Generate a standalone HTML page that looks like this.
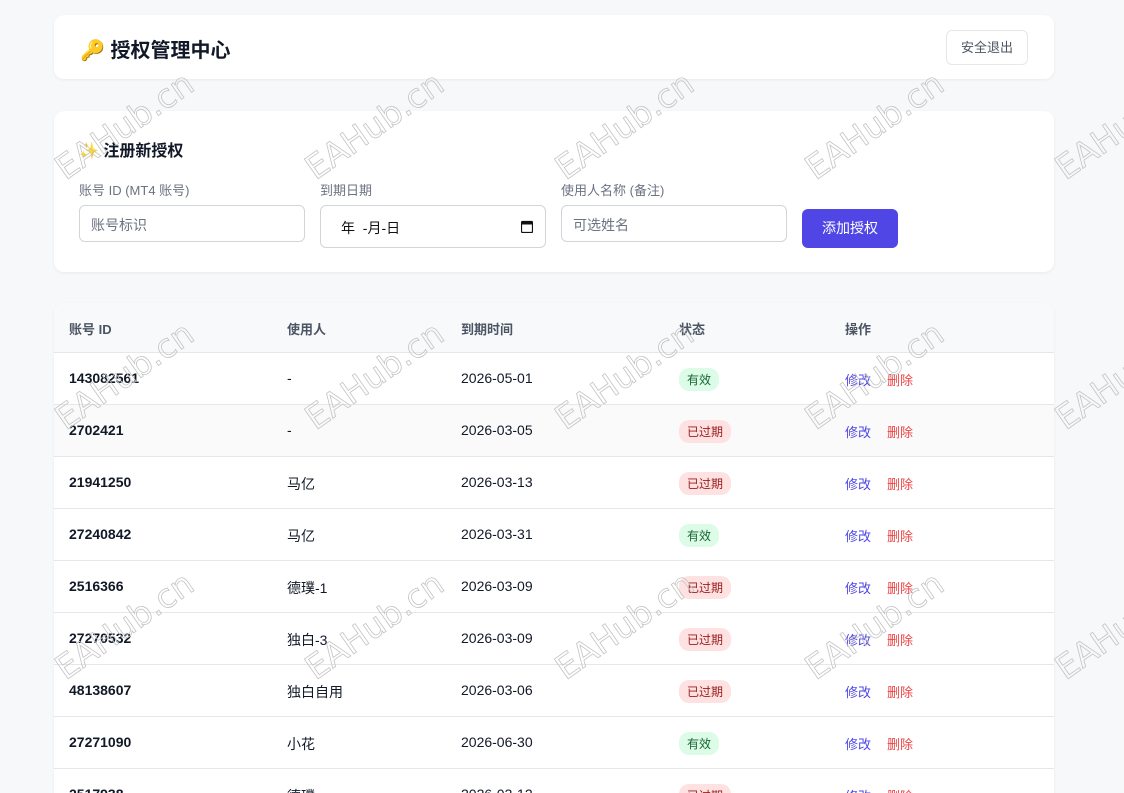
<!DOCTYPE html>
<html><head><meta charset="utf-8"><style>
*{box-sizing:border-box;margin:0;padding:0}
html,body{width:1124px;height:793px;overflow:hidden}
body{background:#f7f8fa;font-family:"Liberation Sans","Noto Sans CJK SC",sans-serif;color:#111827;position:relative}
.card{position:absolute;left:54px;width:1000px;background:#fff;border-radius:10px;box-shadow:0 1px 3px rgba(0,0,0,.06)}
.abs{position:absolute}
.lbl{position:absolute;font-size:13px;color:#6b7280}
.inp{position:absolute;height:37px;border:1px solid #d1d5db;border-radius:6px;font-size:14px;color:#6b7280;padding:9px 11px}
.th{position:absolute;top:16px;font-size:13px;font-weight:bold;color:#4b5563}
.row{position:absolute;left:0;width:1000px;height:52px;border-top:1px solid #e5e7eb;font-size:14px}
.row div{position:absolute;top:17px}
.b{font-weight:bold}
.ok{background:#dcfce7;color:#166534;border-radius:10px;font-size:12px;padding:3px 8px;top:15px!important}
.ex{background:#fee2e2;color:#991b1b;border-radius:10px;font-size:12px;padding:3px 8px;top:15px!important}
.ed{color:#4f46e5;font-size:13px}
.dl{color:#ef4444;font-size:13px}
svg.wm{position:absolute;left:0;top:0;pointer-events:none}
</style></head><body>
<div class="card" style="top:15px;height:64px">
  <div class="abs" style="left:26px;top:19px;font-size:20px;font-weight:bold">🔑 授权管理中心</div>
  <div class="abs" style="right:26px;top:15px;width:82px;height:35px;border:1px solid #e5e7eb;border-radius:6px;font-size:13px;color:#4b5563;text-align:center;line-height:33px">安全退出</div>
</div>
<div class="card" style="top:111px;height:161px">
  <div class="abs" style="left:25px;top:26px;font-size:16px;font-weight:bold">✨ 注册新授权</div>
  <div class="lbl" style="left:25px;top:69px">账号 ID (MT4 账号)</div>
  <div class="inp" style="left:25px;top:94px;width:226px">账号标识</div>
  <div class="lbl" style="left:266px;top:69px">到期日期</div>
  <div class="inp" style="left:266px;top:94px;width:226px;height:43px;color:#111;padding:12px 20px">年 &nbsp;-月-日
    <svg style="position:absolute;right:12px;top:14px" width="12" height="13" viewBox="0 0 12 13"><rect x="0.5" y="1.5" width="11" height="11" rx="1" fill="none" stroke="#111" stroke-width="1.2"/><rect x="0.5" y="1.5" width="11" height="3" fill="#111"/></svg></div>
  <div class="lbl" style="left:507px;top:69px">使用人名称 (备注)</div>
  <div class="inp" style="left:507px;top:94px;width:226px">可选姓名</div>
  <div class="abs" style="left:748px;top:98px;width:96px;height:39px;background:#4f46e5;color:#fff;border-radius:6px;font-size:14px;text-align:center;line-height:39px">添加授权</div>
</div>
<div class="card" style="top:303px;height:500px;overflow:hidden">
  <div class="abs" style="left:0;top:0;width:1000px;height:50px;background:#f8f9fb"></div>
  <div class="th" style="left:15px">账号 ID</div>
  <div class="th" style="left:233px">使用人</div>
  <div class="th" style="left:407px">到期时间</div>
  <div class="th" style="left:625px">状态</div>
  <div class="th" style="left:791px">操作</div>
  <div class="row" style="top:49px"><div class="b" style="left:15px">143082561</div><div style="left:233px">-</div><div style="left:407px">2026-05-01</div><div class="ok" style="left:625px">有效</div><div class="ed" style="left:791px">修改</div><div class="dl" style="left:833px">删除</div></div>
  <div class="row" style="top:101px;background:#fafafa"><div class="b" style="left:15px">2702421</div><div style="left:233px">-</div><div style="left:407px">2026-03-05</div><div class="ex" style="left:625px">已过期</div><div class="ed" style="left:791px">修改</div><div class="dl" style="left:833px">删除</div></div>
  <div class="row" style="top:153px"><div class="b" style="left:15px">21941250</div><div style="left:233px">马亿</div><div style="left:407px">2026-03-13</div><div class="ex" style="left:625px">已过期</div><div class="ed" style="left:791px">修改</div><div class="dl" style="left:833px">删除</div></div>
  <div class="row" style="top:205px"><div class="b" style="left:15px">27240842</div><div style="left:233px">马亿</div><div style="left:407px">2026-03-31</div><div class="ok" style="left:625px">有效</div><div class="ed" style="left:791px">修改</div><div class="dl" style="left:833px">删除</div></div>
  <div class="row" style="top:257px"><div class="b" style="left:15px">2516366</div><div style="left:233px">德璞-1</div><div style="left:407px">2026-03-09</div><div class="ex" style="left:625px">已过期</div><div class="ed" style="left:791px">修改</div><div class="dl" style="left:833px">删除</div></div>
  <div class="row" style="top:309px"><div class="b" style="left:15px">27270532</div><div style="left:233px">独白-3</div><div style="left:407px">2026-03-09</div><div class="ex" style="left:625px">已过期</div><div class="ed" style="left:791px">修改</div><div class="dl" style="left:833px">删除</div></div>
  <div class="row" style="top:361px"><div class="b" style="left:15px">48138607</div><div style="left:233px">独白自用</div><div style="left:407px">2026-03-06</div><div class="ex" style="left:625px">已过期</div><div class="ed" style="left:791px">修改</div><div class="dl" style="left:833px">删除</div></div>
  <div class="row" style="top:413px"><div class="b" style="left:15px">27271090</div><div style="left:233px">小花</div><div style="left:407px">2026-06-30</div><div class="ok" style="left:625px">有效</div><div class="ed" style="left:791px">修改</div><div class="dl" style="left:833px">删除</div></div>
  <div class="row" style="top:465px"><div class="b" style="left:15px">2517938</div><div style="left:233px">德璞</div><div style="left:407px">2026-03-12</div><div class="ex" style="left:625px">已过期</div><div class="ed" style="left:791px">修改</div><div class="dl" style="left:833px">删除</div></div>
</div>
<svg class="wm" width="1124" height="793" font-family="DejaVu Sans, sans-serif" font-size="33" fill="none" stroke="#c4c4c4" stroke-width="0.8" text-anchor="middle">
<g>
<text transform="translate(124,125) rotate(-35)" dy="12">EAHub.cn</text>
<text transform="translate(374,125) rotate(-35)" dy="12">EAHub.cn</text>
<text transform="translate(624,125) rotate(-35)" dy="12">EAHub.cn</text>
<text transform="translate(874,125) rotate(-35)" dy="12">EAHub.cn</text>
<text transform="translate(1124,125) rotate(-35)" dy="12">EAHub.cn</text>
</g>
<g transform="translate(0,250)">
<text transform="translate(124,125) rotate(-35)" dy="12">EAHub.cn</text>
<text transform="translate(374,125) rotate(-35)" dy="12">EAHub.cn</text>
<text transform="translate(624,125) rotate(-35)" dy="12">EAHub.cn</text>
<text transform="translate(874,125) rotate(-35)" dy="12">EAHub.cn</text>
<text transform="translate(1124,125) rotate(-35)" dy="12">EAHub.cn</text>
</g>
<g transform="translate(0,500)">
<text transform="translate(124,125) rotate(-35)" dy="12">EAHub.cn</text>
<text transform="translate(374,125) rotate(-35)" dy="12">EAHub.cn</text>
<text transform="translate(624,125) rotate(-35)" dy="12">EAHub.cn</text>
<text transform="translate(874,125) rotate(-35)" dy="12">EAHub.cn</text>
<text transform="translate(1124,125) rotate(-35)" dy="12">EAHub.cn</text>
</g>
</svg>
</body></html>
